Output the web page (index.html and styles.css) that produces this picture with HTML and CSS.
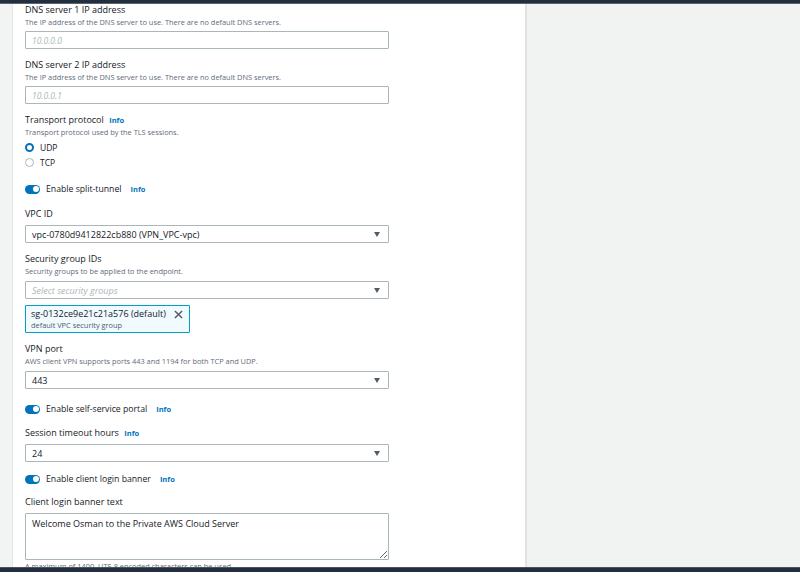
FILE: index.html
```html
<!DOCTYPE html>
<html>

<head>
  <title>Create Client VPN endpoint</title>
  <link rel="stylesheet" href="styles.css">
</head>

<body>
  <div class="topbar"></div>

  <div class="main">
    <div class="gutter"></div>

    <div class="panel">

      <div class="field">
        <div class="label">DNS server 1 IP address</div>
        <div class="desc">The IP address of the DNS server to use. There are no default DNS servers.</div>
        <input class="text-input" type="text" placeholder="10.0.0.0" />
      </div>

      <div class="field">
        <div class="label">DNS server 2 IP address</div>
        <div class="desc">The IP address of the DNS server to use. There are no default DNS servers.</div>
        <input class="text-input" type="text" placeholder="10.0.0.1" />
      </div>

      <div class="field">
        <div class="label">Transport protocol <a class="info">Info</a></div>
        <div class="desc desc-tight">Transport protocol used by the TLS sessions.</div>
        <div class="radio-row">
          <span class="radio checked"></span>
          <span>UDP</span>
        </div>
        <div class="radio-row">
          <span class="radio"></span>
          <span>TCP</span>
        </div>
      </div>

      <div class="toggle-row split">
        <span class="toggle"></span>
        <span>Enable split-tunnel</span>
        <a class="info">Info</a>
      </div>

      <div class="field">
        <div class="label label-spaced">VPC ID</div>
        <div class="select">
          <span>vpc-0780d9412822cb880 (VPN_VPC-vpc)</span>
          <span class="caret"></span>
        </div>
      </div>

      <div class="field">
        <div class="label">Security group IDs</div>
        <div class="desc desc-loose">Security groups to be applied to the endpoint.</div>
        <div class="select">
          <span class="placeholder">Select security groups</span>
          <span class="caret"></span>
        </div>
        <div class="token">
          <div class="token-top">
            <span>sg-0132ce9e21c21a576 (default)</span>
            <svg class="token-x" width="9" height="9" viewBox="0 0 10 10">
              <path d="M1 1 L9 9 M9 1 L1 9" stroke="#545b64" stroke-width="1.6" fill="none" />
            </svg>
          </div>
          <div class="token-sub">default VPC security group</div>
        </div>
      </div>

      <div class="field">
        <div class="label">VPN port</div>
        <div class="desc desc-loose">AWS client VPN supports ports 443 and 1194 for both TCP and UDP.</div>
        <div class="select">
          <span>443</span>
          <span class="caret"></span>
        </div>
      </div>

      <div class="toggle-row portal">
        <span class="toggle"></span>
        <span>Enable self-service portal</span>
        <a class="info">Info</a>
      </div>

      <div class="field">
        <div class="label label-spaced">Session timeout hours <a class="info">Info</a></div>
        <div class="select">
          <span>24</span>
          <span class="caret"></span>
        </div>
      </div>

      <div class="toggle-row banner">
        <span class="toggle"></span>
        <span>Enable client login banner</span>
        <a class="info">Info</a>
      </div>

      <div class="field">
        <div class="label label-spaced">Client login banner text</div>
        <textarea class="textarea">Welcome Osman to the Private AWS Cloud Server</textarea>
        <div class="desc">A maximum of 1400, UTF-8 encoded characters can be used.</div>
      </div>

    </div>

    <div class="side"></div>
  </div>

  <div class="bottombar"></div>
</body>

</html>
```

FILE: styles.css
```css
/* Page frame */
html,
body {
  margin: 0;
  height: 100%;
}

body {
  display: flex;
  flex-direction: column;
  font-family: "Open Sans", "Noto Sans", sans-serif;
  color: #16191f;
  background-color: #f2f3f3;
  overflow: hidden;
}

.topbar {
  height: 3px;
  background-color: #232f3e;
  border-bottom: 1px solid #5a6470;
  flex-shrink: 0;
}

.bottombar {
  height: 4px;
  background-color: #232f3e;
  border-top: 1px solid #4a5461;
  flex-shrink: 0;
}

.main {
  flex: 1;
  display: flex;
  min-height: 0;
}

.gutter {
  width: 12px;
  background-color: #f2f3f3;
  border-right: 1px solid #e4e7e7;
}

/* White form panel */
.panel {
  width: 500px;
  padding: 0 0 0 12px;
  background-color: #ffffff;
  border-right: 2px solid #e1e4e4;
  overflow: hidden;
  display: flex;
  flex-direction: column;
}

.side {
  flex: 1;
  background-color: #f1f2f2;
}

/* Form fields */
.field {
  margin-bottom: 10px;
  width: 364px;
  flex-shrink: 0;
}

.label {
  font-size: 9px;
  line-height: 12px;
  height: 12px;
}

.label-spaced {
  margin-bottom: 5px;
}

.desc {
  font-size: 7.4px;
  line-height: 12px;
  height: 12px;
  color: #5f6b7a;
  margin-bottom: 3px;
  white-space: nowrap;
}

.desc-tight {
  margin-bottom: 2px;
}

.desc-loose {
  margin-bottom: 4px;
}

.info {
  color: #0073bb;
  font-weight: 700;
  font-size: 7.5px;
  margin-left: 3px;
}

.text-input {
  display: block;
  box-sizing: border-box;
  width: 364px;
  height: 18px;
  margin: 0;
  padding: 0 6px;
  border: 1px solid #aab7b8;
  border-radius: 1px;
  font-family: inherit;
  font-size: 8.5px;
  font-style: italic;
  outline: none;
}

.text-input::placeholder {
  color: #aab7b8;
}

.select {
  box-sizing: border-box;
  height: 18px;
  border: 1px solid #aab7b8;
  border-radius: 1px;
  padding: 0 8px 0 6px;
  display: flex;
  align-items: center;
  justify-content: space-between;
  font-size: 9px;
}

.placeholder {
  color: #aab7b8;
  font-style: italic;
}

.caret {
  width: 0;
  height: 0;
  border-left: 3.5px solid transparent;
  border-right: 3.5px solid transparent;
  border-top: 5px solid #545b64;
}

/* Radios */
.radio-row {
  height: 15px;
  display: flex;
  align-items: center;
  gap: 6px;
  font-size: 8.5px;
}

.radio {
  box-sizing: border-box;
  width: 9px;
  height: 9px;
  border-radius: 50%;
  border: 1px solid #aab7b8;
}

.radio.checked {
  border: 2.5px solid #0073bb;
}

/* Toggles */
.toggle-row {
  height: 12px;
  display: flex;
  align-items: center;
  font-size: 8.7px;
  flex-shrink: 0;
}

.toggle-row .info {
  margin-left: 9px;
}

.split {
  margin: 3px 0 13px;
}

.portal {
  margin: 4px 0 12px;
}

.banner {
  margin: 1px 0 11px;
}

.toggle {
  position: relative;
  width: 15px;
  height: 9px;
  border-radius: 5px;
  background-color: #0073bb;
  margin-right: 6px;
}

.toggle::after {
  content: "";
  position: absolute;
  right: 1.5px;
  top: 1.5px;
  width: 6px;
  height: 6px;
  border-radius: 50%;
  background-color: #ffffff;
}

/* Selected security group token */
.token {
  box-sizing: border-box;
  width: 165px;
  height: 28px;
  margin-top: 6px;
  padding: 2px 5px;
  background-color: #f1faff;
  border: 1px solid #00a1c9;
  border-radius: 1px;
}

.token-top {
  display: flex;
  align-items: center;
  justify-content: space-between;
  font-size: 9px;
  line-height: 12px;
}

.token-x {
  margin-right: 1px;
}

.token-sub {
  font-size: 7.4px;
  line-height: 11px;
  color: #545b64;
}

/* Banner text */
.textarea {
  display: block;
  box-sizing: border-box;
  width: 364px;
  height: 47px;
  margin: 0;
  padding: 3px 6px;
  border: 1px solid #aab7b8;
  border-radius: 1px;
  font-family: inherit;
  font-size: 9px;
  color: #16191f;
  resize: vertical;
  outline: none;
}
```
